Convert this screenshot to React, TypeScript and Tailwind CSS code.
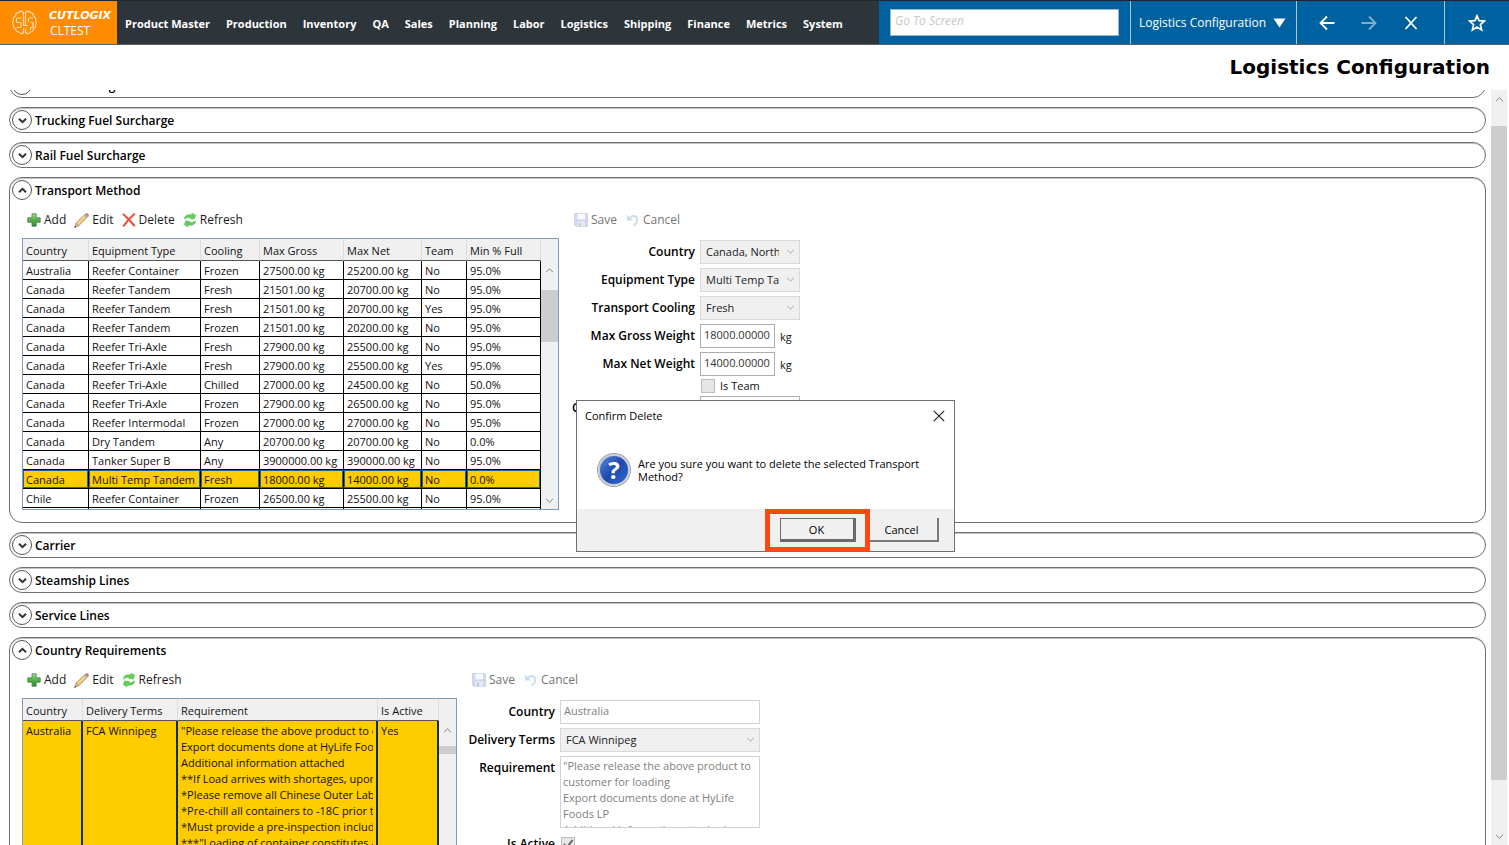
import type { ReactNode } from "react";

const menu = [
  "Product Master", "Production", "Inventory", "QA", "Sales", "Planning",
  "Labor", "Logistics", "Shipping", "Finance", "Metrics", "System",
];

const transportColumns = [
  { label: "Country", width: "w-[66px]" },
  { label: "Equipment Type", width: "w-[112px]" },
  { label: "Cooling", width: "w-[59px]" },
  { label: "Max Gross", width: "w-[84px]" },
  { label: "Max Net", width: "w-[78px]" },
  { label: "Team", width: "w-[45px]" },
  { label: "Min % Full", width: "w-[74px]" },
];

const transportRows = [
  ["Australia", "Reefer Container", "Frozen", "27500.00 kg", "25200.00 kg", "No", "95.0%"],
  ["Canada", "Reefer Tandem", "Fresh", "21501.00 kg", "20700.00 kg", "No", "95.0%"],
  ["Canada", "Reefer Tandem", "Fresh", "21501.00 kg", "20700.00 kg", "Yes", "95.0%"],
  ["Canada", "Reefer Tandem", "Frozen", "21501.00 kg", "20200.00 kg", "No", "95.0%"],
  ["Canada", "Reefer Tri-Axle", "Fresh", "27900.00 kg", "25500.00 kg", "No", "95.0%"],
  ["Canada", "Reefer Tri-Axle", "Fresh", "27900.00 kg", "25500.00 kg", "Yes", "95.0%"],
  ["Canada", "Reefer Tri-Axle", "Chilled", "27000.00 kg", "24500.00 kg", "No", "50.0%"],
  ["Canada", "Reefer Tri-Axle", "Frozen", "27900.00 kg", "26500.00 kg", "No", "95.0%"],
  ["Canada", "Reefer Intermodal", "Frozen", "27000.00 kg", "27000.00 kg", "No", "95.0%"],
  ["Canada", "Dry Tandem", "Any", "20700.00 kg", "20700.00 kg", "No", "0.0%"],
  ["Canada", "Tanker Super B", "Any", "3900000.00 kg", "390000.00 kg", "No", "95.0%"],
  ["Canada", "Multi Temp Tandem", "Fresh", "18000.00 kg", "14000.00 kg", "No", "0.0%"],
  ["Chile", "Reefer Container", "Frozen", "26500.00 kg", "25500.00 kg", "No", "95.0%"],
  ["", "", "", "", "", "", ""],
];
const selectedTransport = 11;

const requirementColumns = [
  { label: "Country", width: "w-[60px]" },
  { label: "Delivery Terms", width: "w-[95px]" },
  { label: "Requirement", width: "w-[200px]" },
  { label: "Is Active", width: "w-[61px]" },
];

const requirementLines = [
  '"Please release the above product to customer for loading',
  "Export documents done at HyLife Foods LP",
  "Additional information attached",
  "**If Load arrives with shortages, upon receipt",
  "*Please remove all Chinese Outer Labels",
  "*Pre-chill all containers to -18C prior to loading",
  "*Must provide a pre-inspection including photos",
  '***"Loading of container constitutes acceptance',
];

function AddIcon() {
  return (
    <svg width="14" height="14" viewBox="0 0 14 14" aria-hidden="true">
      <defs>
        <linearGradient id="plus" x1="0" y1="0" x2="0" y2="1">
          <stop offset="0" stopColor="#a9dc9b" />
          <stop offset="0.5" stopColor="#55ac4b" />
          <stop offset="1" stopColor="#2f8a35" />
        </linearGradient>
      </defs>
      <path d="M5 .8h4.200v4h4v4.400h-4v4H5v-4H.8V4.800H5z" fill="url(#plus)" stroke="#4d8a50" strokeWidth="0.9" strokeLinejoin="round" />
    </svg>
  );
}

function EditIcon() {
  return (
    <svg width="15" height="15" viewBox="0 0 15 15" aria-hidden="true">
      <path d="M.6 14.600 2 10.200 4.700 12.700z" fill="#d9c6a0" stroke="#8a7a5a" strokeWidth=".6" />
      <path d="M.4 14.800 1.200 12.800 2.300 13.900z" fill="#444" />
      <path d="M2 10.200 10.200 2.200 12.800 4.700 4.700 12.700z" fill="#edc578" stroke="#98793f" strokeWidth=".7" />
      <path d="M3.200 11.200 11.400 3.200" stroke="#fbe6b5" strokeWidth="1" />
      <path d="M10.200 2.200 11.500 1 14 3.500 12.800 4.700z" fill="#b9bcc6" stroke="#8b8e99" strokeWidth=".5" />
      <path d="M11.500 1Q13 .1 14 .9T14 3.500z" fill="#d97a7a" stroke="#b45c5c" strokeWidth=".5" />
    </svg>
  );
}

function DeleteIcon() {
  return (
    <svg width="14" height="14" viewBox="0 0 14 14" aria-hidden="true">
      <path d="M1.600 1.400Q6.500 5.500 12.200 12.500M12.200 1.200Q6 6 1.800 12.800" stroke="#ee4a38" strokeWidth="2" fill="none" strokeLinecap="round" />
    </svg>
  );
}

function RefreshIcon() {
  return (
    <svg width="14" height="14" viewBox="0 0 14 14" aria-hidden="true">
      <path d="M1.400 6.200C1.600 2.800 4 1.200 8 1.900L9.200.3 12.600 2.200 11.400 6.100 6.600 5.600 7.800 4.400C5.200 3.900 3.400 4.600 1.400 6.200z" fill="#62cf58" stroke="#4aae45" strokeWidth=".5" />
      <path d="M12.600 7.800C12.400 11.200 10 12.800 6 12.100L4.800 13.700 1.400 11.800 2.600 7.900 7.400 8.400 6.200 9.600C8.800 10.100 10.600 9.400 12.600 7.800z" fill="#62cf58" stroke="#4aae45" strokeWidth=".5" />
    </svg>
  );
}

function SaveIcon() {
  return (
    <svg width="14" height="14" viewBox="0 0 14 14" aria-hidden="true">
      <path d="M.5.5h13v13H2L.5 12z" fill="#d3d7ee" stroke="#d0d4ea" />
      <path d="M3.500.8h7.500v5.500H3.500z" fill="#f7fafc" />
      <path d="M3.500 8.500h7.500v5H3.500z" fill="#e6e9f0" />
      <path d="M5 10h2v3.500H5z" fill="#c4c9de" />
    </svg>
  );
}

function UndoIcon() {
  return (
    <svg width="14" height="14" viewBox="0 0 14 14" aria-hidden="true">
      <path d="M3.500 5.200C7 1.400 11.400 2.800 11.200 7 11.100 9.500 9.600 11.500 7.500 12.500" fill="none" stroke="#cfe0f2" strokeWidth="2.200" />
      <path d="M1 1.500v6h6z" fill="#c9dcf0" />
    </svg>
  );
}

function Chevron({ up = false, className = "" }: { up?: boolean; className?: string }) {
  return (
    <svg width="9" height="9" viewBox="0 0 9 9" className={className} aria-hidden="true">
      <path d={up ? "M1 6.200 4.500 2.800 8 6.200" : "M1 2.800 4.500 6.200 8 2.800"} fill="none" stroke="currentColor" strokeWidth="inherit" />
    </svg>
  );
}

function ToolButton({ icon, label, disabled = false }: { icon: ReactNode; label: string; disabled?: boolean }) {
  return (
    <button type="button" disabled={disabled} className="flex items-center gap-[3px] text-xs text-[#1a1a1a] disabled:text-[#757575]">
      {icon}
      {label}
    </button>
  );
}

function Section({ title, open = false, children }: { title: string; open?: boolean; children?: ReactNode }) {
  return (
    <section className="rounded-[13px] border border-[#707070] shadow-[inset_0_1px_0_#c4c4c4]">
      <button type="button" aria-expanded={open} className="flex h-6 w-full items-center gap-[3px] pl-0.5 text-left text-xs font-semibold text-black">
        <span className="flex size-5 items-center justify-center rounded-full border border-[#555] bg-white">
          <Chevron up={open} className="stroke-2 text-[#333]" />
        </span>
        <span className="pt-0.5">{title}</span>
      </button>
      {children}
    </section>
  );
}

function ScrollTrack({ thumb }: { thumb: string }) {
  return (
    <div className="flex grow flex-col items-center bg-[#f0f0f0] text-[#858585]">
      <Chevron up className="my-[5px] shrink-0 stroke-1" />
      <div className={thumb} />
      <Chevron className="mt-auto mb-1 shrink-0 stroke-1" />
    </div>
  );
}

function HeadRow({ columns }: { columns: { label: string; width: string }[] }) {
  return (
    <thead>
      <tr className="h-[22px]">
        {columns.map((c) => (
          <th key={c.label} scope="col" className={`${c.width} border-r border-b border-r-[#dcdcdc] border-b-[#555] bg-[#f0f0f0] pt-[3px] pl-[3px] text-left font-normal whitespace-nowrap`}>
            {c.label}
          </th>
        ))}
      </tr>
    </thead>
  );
}

function Field({ id, label, children }: { id: string; label: string; children: ReactNode }) {
  return (
    <div className="contents">
      <label htmlFor={id} className="flex h-7 items-center justify-end text-xs font-semibold whitespace-nowrap text-black">{label}</label>
      <div className="flex min-h-7 items-center gap-[5px]">{children}</div>
    </div>
  );
}

function Drop({ id, value, width }: { id: string; value: string; width: string }) {
  return (
    <div className={`${width} relative`}>
      <select id={id} disabled className="block h-6 w-full appearance-none border border-[#d9d9d9] bg-[#f0f0f0] pr-5 pl-[5px] text-[#222] opacity-100">
        <option>{value}</option>
      </select>
      <Chevron className="pointer-events-none absolute top-[7px] right-[5px] stroke-1 text-[#aaa]" />
    </div>
  );
}

function TransportSection() {
  return (
    <Section title="Transport Method" open>
      <div className="flex gap-[15px] pb-3 pl-3">
        <div>
          <div className="flex h-9 items-center gap-2 pl-[5px]">
            <ToolButton icon={<AddIcon />} label="Add" />
            <ToolButton icon={<EditIcon />} label="Edit" />
            <ToolButton icon={<DeleteIcon />} label="Delete" />
            <ToolButton icon={<RefreshIcon />} label="Refresh" />
          </div>
          <div className="flex h-[272px] w-[537px] overflow-hidden border border-[#7f9db9] bg-[#f0f0f0]">
            <table className="w-[518px] shrink-0 table-fixed border-separate border-spacing-0">
              <HeadRow columns={transportColumns} />
              <tbody>
                {transportRows.map((row, r) => (
                  <tr key={r} className="h-[19px]">
                    {row.map((cell, c) => (
                      <td
                        key={c}
                        className={
                          r === selectedTransport
                            ? "border-r border-b border-black bg-[#ffcc00] pt-0.5 pl-[3px] leading-4 whitespace-nowrap shadow-[inset_0_0_0_1px_#26648f]"
                            : "border-r border-b border-black bg-white pt-0.5 pl-[3px] leading-4 whitespace-nowrap"
                        }
                      >
                        {cell}
                      </td>
                    ))}
                  </tr>
                ))}
              </tbody>
            </table>
            <div className="flex grow pt-[22px]">
              <ScrollTrack thumb="mt-[10px] h-[52px] w-full bg-[#cdcdcd]" />
            </div>
          </div>
        </div>
        <form>
          <div className="flex h-9 items-center gap-[9px]">
            <ToolButton icon={<SaveIcon />} label="Save" disabled />
            <ToolButton icon={<UndoIcon />} label="Cancel" disabled />
          </div>
          <div className="grid grid-cols-[121px_auto] gap-x-[5px]">
            <Field id="country" label="Country"><Drop id="country" value="Canada, North America" width="w-[100px]" /></Field>
            <Field id="equipment" label="Equipment Type"><Drop id="equipment" value="Multi Temp Tandem" width="w-[100px]" /></Field>
            <Field id="cooling" label="Transport Cooling"><Drop id="cooling" value="Fresh" width="w-[100px]" /></Field>
            <Field id="gross" label="Max Gross Weight">
              <input id="gross" readOnly value="18000.00000" className="h-6 w-[75px] border border-[#abadb3] bg-white px-[3px] pb-1 text-[#333]" />
              <span className="pt-0.5">kg</span>
            </Field>
            <Field id="net" label="Max Net Weight">
              <input id="net" readOnly value="14000.00000" className="h-6 w-[75px] border border-[#abadb3] bg-white px-[3px] pb-1 text-[#333]" />
              <span className="pt-0.5">kg</span>
            </Field>
            <label className="col-start-2 flex h-4 items-center gap-[5px] pl-px">
              <input type="checkbox" disabled className="size-[14px] appearance-none border border-[#bcbcbc] bg-[#e6e6e6]" />
              Is Team
            </label>
            <Field id="minimum" label="Container Min. % Full">
              <input id="minimum" readOnly value="0.0" className="h-6 w-[100px] border border-[#abadb3] bg-white px-[3px]" />
            </Field>
          </div>
        </form>
      </div>
    </Section>
  );
}

function RequirementsSection() {
  const cell = "border-r-2 border-b border-[#0d2f52] bg-[#ffcc00] pt-0.5 pl-[3px] align-top leading-4 whitespace-nowrap";
  return (
    <Section title="Country Requirements" open>
      <div className="flex gap-[15px] pb-3 pl-3">
        <div>
          <div className="flex h-9 items-center gap-2 pl-[5px]">
            <ToolButton icon={<AddIcon />} label="Add" />
            <ToolButton icon={<EditIcon />} label="Edit" />
            <ToolButton icon={<RefreshIcon />} label="Refresh" />
          </div>
          <div className="flex h-[272px] w-[435px] overflow-hidden border border-[#7f9db9] bg-[#f0f0f0]">
            <table className="w-[416px] shrink-0 table-fixed border-separate border-spacing-0">
              <HeadRow columns={requirementColumns} />
              <tbody>
                <tr className="h-[300px]">
                  <td className={cell}>Australia</td>
                  <td className={cell}>FCA Winnipeg</td>
                  <td className={cell}>
                    <div className="mr-[3px] overflow-hidden">
                      {requirementLines.map((line) => <p key={line}>{line}</p>)}
                    </div>
                  </td>
                  <td className={cell}>Yes</td>
                </tr>
              </tbody>
            </table>
            <div className="flex grow pt-[22px]">
              <ScrollTrack thumb="mt-[6px] h-2 w-full bg-[#cdcdcd]" />
            </div>
          </div>
        </div>
        <form>
          <div className="flex h-9 items-center gap-[9px]">
            <ToolButton icon={<SaveIcon />} label="Save" disabled />
            <ToolButton icon={<UndoIcon />} label="Cancel" disabled />
          </div>
          <div className="grid grid-cols-[83px_auto] gap-x-[5px]">
            <Field id="req-country" label="Country">
              <input id="req-country" disabled value="Australia" className="h-6 w-[200px] border border-[#d0d1d5] bg-white px-[3px] pb-1 text-[#808080]" />
            </Field>
            <Field id="terms" label="Delivery Terms"><Drop id="terms" value="FCA Winnipeg" width="w-[200px]" /></Field>
            <Field id="requirement" label="Requirement">
              <textarea
                id="requirement"
                disabled
                className="my-0.5 block h-[72px] w-[200px] resize-none overflow-hidden border border-[#d0d1d5] bg-white px-[2px] pt-px leading-4 text-[#808080]"
                value={'"Please release the above product to\ncustomer for loading\nExport documents done at HyLife\nFoods LP\nAdditional information attached'}
              />
            </Field>
            <Field id="active" label="Is Active">
              <span className="relative ml-px flex">
                <input id="active" type="checkbox" checked disabled className="size-[14px] appearance-none border border-[#bcbcbc] bg-[#e6e6e6]" />
                <svg className="pointer-events-none absolute inset-0" width="14" height="14" viewBox="0 0 14 14" aria-hidden="true">
                  <path d="M3 7 6 10.500 11.500 3" fill="none" stroke="#606060" strokeWidth="1.800" />
                </svg>
              </span>
            </Field>
          </div>
        </form>
      </div>
    </Section>
  );
}

function ConfirmDialog() {
  return (
    <div role="dialog" aria-labelledby="confirm-title" className="absolute top-[400px] left-[576px] flex h-[152px] w-[379px] flex-col border border-[#707070] bg-white text-black">
      <div className="flex h-[30px] items-center justify-between pr-[9px] pl-2">
        <h2 id="confirm-title">Confirm Delete</h2>
        <button type="button" aria-label="Close">
          <svg width="12" height="12" viewBox="0 0 12 12" aria-hidden="true">
            <path d="M.8.8 11.200 11.200M11.200.8.8 11.200" stroke="#222" strokeWidth="1.200" />
          </svg>
        </button>
      </div>
      <div className="flex grow items-center gap-2 pl-[21px]">
        <span className="flex size-8 items-center justify-center rounded-full border-2 border-[#c9ccd2] bg-linear-to-br from-[#5f8be0] via-[#1c49ad] to-[#2f6bd8] text-2xl font-bold text-white shadow-[0_0_0_1px_#9a9da3]">?</span>
        <p className="w-[300px] leading-[13px]">Are you sure you want to delete the selected Transport Method?</p>
      </div>
      <div className="flex h-[42px] items-center justify-end bg-[#f0f0f0] pr-[15px]">
        <div className="relative z-10 -my-px flex h-[43px] w-[105px] items-center justify-center border-[5px] border-[#ff4713]">
          <button type="button" className="h-6 w-[76px] border border-r-[3px] border-b-[3px] border-[#6a6a6a] bg-[#f0f0f0] pt-0.5">OK</button>
        </div>
        <button type="button" className="h-6 w-[69px] border-r-2 border-b-2 border-[#7a7a7a] pt-0.5 pr-1">Cancel</button>
      </div>
    </div>
  );
}

function Header() {
  return (
    <header className="flex h-[45px] shrink-0 border-t border-b border-t-[#20282d] border-b-[#5b6266] bg-[#2d343a] text-white">
      <div className="flex w-[117px] shrink-0 items-center gap-3 bg-[#ff8c00] pl-3">
        <svg className="shrink-0" width="25" height="25" viewBox="0 0 25 25" fill="none" stroke="#ffdcae" strokeWidth="1.200" strokeLinejoin="round" aria-hidden="true">
          <path d="M11.500 5V2.500Q9 0 6.500 2.500 3.500 3 3.500 6 .5 7.500 1.500 10.500-.2 12.500 1.500 15 .8 18 3.500 19 4 22 7 22 9 25 11.500 22.500V18" />
          <path d="M9.500 8H5.500Q4.500 8 4.500 9V11.500Q4.500 12.500 5.500 12.500H8Q9 12.500 9 13.500V16.500Q9 17.500 8 17.500H4.500" />
          <path d="M11.500 5V15.500H16M13.500 15.500V5" />
          <path d="M13.500 5V2.500Q16 0 18.500 2.500 21.500 3 21.500 6 24.500 7.500 23.500 10.500 25.200 12.500 23.500 15 24.200 18 21.500 19 21 22 18 22 16 25 13.500 22.500V18.500" />
          <path d="M21 8H17.500Q16.500 8 16.500 9V12M19 12.500H21V17.500H18.500V20" />
        </svg>
        <div className="flex flex-col items-center pt-0.5">
          <span className="font-['DejaVu_Sans'] text-[11px] leading-[14px] font-bold italic">CUTLOGIX</span>
          <span className="pr-5 text-xs leading-4">CLTEST</span>
        </div>
      </div>
      <nav className="flex grow items-center gap-4 pl-2 font-bold">
        {menu.map((item) => <a key={item} href="#" className="pt-0.5 whitespace-nowrap">{item}</a>)}
      </nav>
      <div className="flex shrink-0 bg-[#0061a0]">
        <div className="flex items-center px-[11px]">
          <input aria-label="Go To Screen" placeholder="Go To Screen" className="h-[27px] w-[229px] border border-[#9cb4c8] bg-white px-1 pb-1 text-xs text-black italic placeholder:text-[#c8c8c8]" />
        </div>
        <button type="button" className="flex w-[166px] items-center justify-between border-l border-[#a9c9df] pr-[10px] pl-2 text-xs whitespace-nowrap">
          Logistics Configuration
          <svg width="13" height="10" viewBox="0 0 13 10" aria-hidden="true"><path d="M.5.5h12L6.500 9.500z" fill="#fff" /></svg>
        </button>
        <div className="flex w-[148px] items-center gap-[26px] border-l border-[#a9c9df] pl-[22px]">
          <button type="button" aria-label="Back">
            <svg width="16" height="16" viewBox="0 0 16 16" fill="none" stroke="#fff" strokeWidth="1.800" aria-hidden="true"><path d="M15.500 8H1.500M8 1.500 1.500 8 8 14.500" /></svg>
          </button>
          <button type="button" aria-label="Forward">
            <svg width="16" height="16" viewBox="0 0 16 16" fill="none" stroke="#7fb0d0" strokeWidth="1.800" aria-hidden="true"><path d="M.5 8h14M8 1.500 14.500 8 8 14.500" /></svg>
          </button>
          <button type="button" aria-label="Close screen">
            <svg width="16" height="16" viewBox="0 0 16 16" fill="none" stroke="#fff" strokeWidth="1.800" aria-hidden="true"><path d="M2.500 2 13.500 14M13.500 2 2.500 14" /></svg>
          </button>
        </div>
        <button type="button" aria-label="Favourite" className="flex w-[65px] items-center justify-center border-l border-[#a9c9df]">
          <svg width="18" height="18" viewBox="0 0 18 18" fill="none" stroke="#fff" strokeWidth="1.700" aria-hidden="true">
            <path d="M9 1.800 11.100 6.700 16.400 7.100 12.400 10.600 13.600 15.900 9 13.100 4.400 15.900 5.600 10.600 1.600 7.100 6.900 6.700z" />
          </svg>
        </button>
      </div>
    </header>
  );
}

export default function App() {
  return (
    <div className="relative flex h-screen flex-col overflow-hidden bg-white font-['Open_Sans',sans-serif] text-[11px] leading-4 text-[#111]">
      <Header />
      <h1 className="h-[45px] shrink-0 pr-[19px] text-right font-['DejaVu_Sans',sans-serif] text-[20px] leading-[45px] font-bold text-black">Logistics Configuration</h1>
      <main className="flex min-h-0 grow gap-[5px] pr-0.5 pl-[9px]">
        <div className="grow overflow-hidden">
          <div className="-mt-[18px] flex flex-col gap-[9px]">
            <Section title="Carrier Rating" />
            <Section title="Trucking Fuel Surcharge" />
            <Section title="Rail Fuel Surcharge" />
            <TransportSection />
            <Section title="Carrier" />
            <Section title="Steamship Lines" />
            <Section title="Service Lines" />
            <RequirementsSection />
          </div>
        </div>
        <div className="flex w-4 shrink-0">
          <ScrollTrack thumb="mt-[17px] h-[654px] w-full shrink-0 bg-[#cdcdcd]" />
        </div>
      </main>
      <ConfirmDialog />
    </div>
  );
}
